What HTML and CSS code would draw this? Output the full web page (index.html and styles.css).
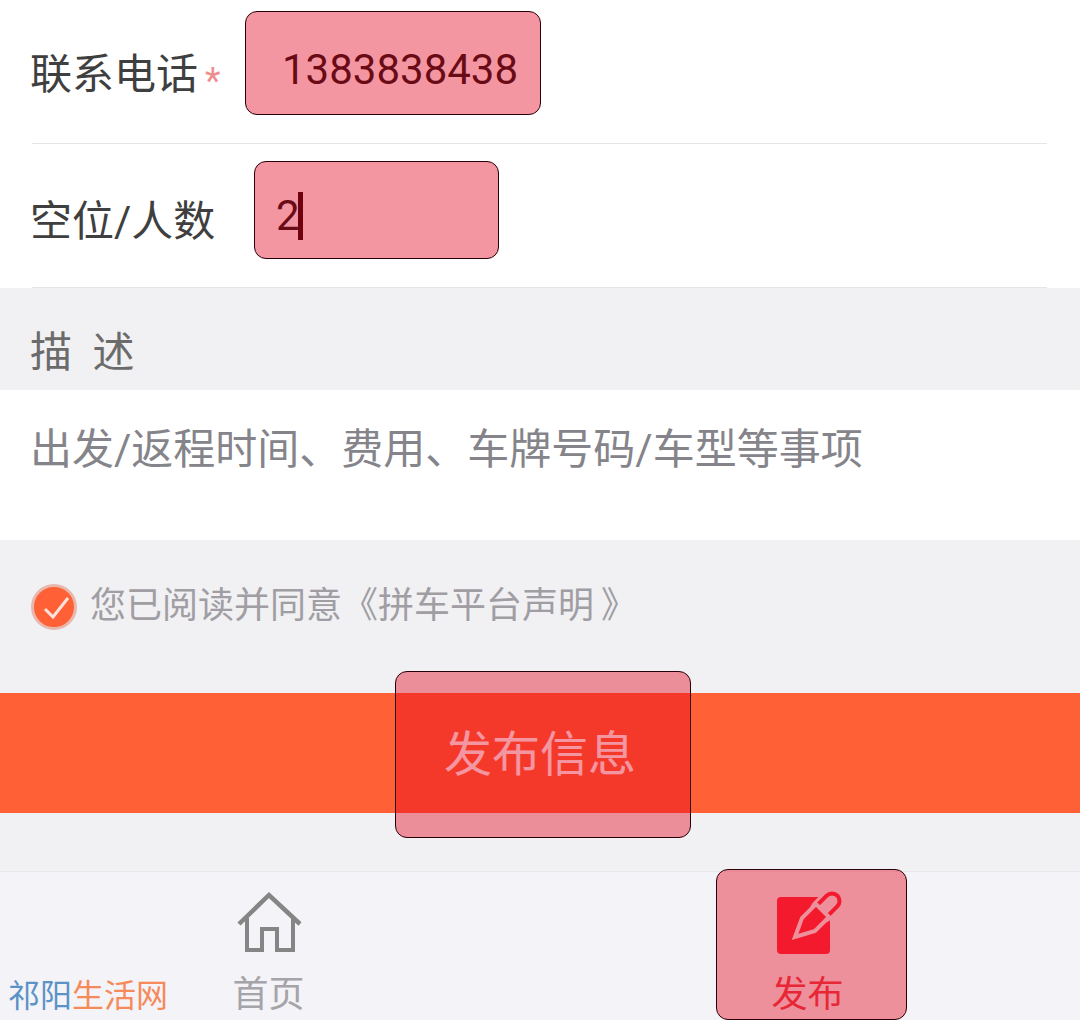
FILE: index.html
```html
<!DOCTYPE html>
<html lang="zh-CN">
<head>
  <meta charset="UTF-8" />
  <meta name="viewport" content="width=device-width, initial-scale=1.0"/>
  <title>发布信息</title>
  <link rel="stylesheet" href="styles.css">
</head>
<body>
  <div class="page">

    <!-- 表单 -->
    <div class="form-row">
      <div class="label">联系电话<span class="star">*</span></div>
      <div class="value value-phone">1383838438</div>
    </div>
    <div class="form-row">
      <div class="label">空位/人数</div>
      <div class="value">2<span class="caret"></span></div>
    </div>

    <div class="section-title">描 述</div>
    <div class="desc">出发/返程时间、费用、车牌号码/车型等事项</div>

    <div class="agree">
      <svg class="check" width="46" height="46" viewBox="0 0 46 46">
        <circle cx="23" cy="23" r="21.500" fill="#ff6035" stroke="#e8b8ad" stroke-width="3"/>
        <path d="M14 25 L22 33 L37 14" fill="none" stroke="#fbe3dc" stroke-width="3"/>
      </svg>
      <span>您已阅读并同意《拼车平台声明 》</span>
    </div>

    <div class="submit">发布信息</div>

    <!-- 底部导航 -->
    <div class="tabbar">
      <div class="tab tab-home">
        <svg class="tab-icon" width="70" height="70" viewBox="0 0 70 70">
          <path d="M5 39 L35 10 L66 39" fill="none" stroke="#858585" stroke-width="4.500"/>
          <path d="M13 33 V65 H28 V44 H43 V65 H59 V33" fill="none" stroke="#858585" stroke-width="4"/>
        </svg>
        <span>首页</span>
      </div>
      <div class="tab tab-active">
        <svg class="tab-icon" width="70" height="70" viewBox="0 0 70 70">
          <rect x="4" y="12" width="53" height="57" rx="4" fill="#ff2a38"/>
          <path d="M49.500 25.500 L59 16" stroke="#f4f3f7" stroke-width="25" stroke-linecap="round"/>
          <path d="M49.500 25.500 L59 16" stroke="#ff2a38" stroke-width="19" stroke-linecap="round"/>
          <path d="M49.500 25.500 L59 16" stroke="#f4f3f7" stroke-width="11" stroke-linecap="round"/>
          <path d="M22 52 L29 33 L43 19 L56 32 L42 46 Z" fill="#ff2a38" stroke="#f4f3f7" stroke-width="4"/>
        </svg>
        <span>发布</span>
      </div>
    </div>

    <div class="watermark"><span class="wm-blue">祁阳</span><span class="wm-orange">生活网</span></div>

    <!-- 标注框 -->
    <div class="mark mark-phone"></div>
    <div class="mark mark-seats"></div>
    <div class="mark mark-submit"></div>
    <div class="mark mark-tab"></div>

  </div>
</body>
</html>
```

FILE: styles.css
```css
:root {
  --gray-bg: #f1f0f3;
  --orange: #ff6035;
}

* {
  box-sizing: border-box;
}

html, body {
  margin: 0;
  padding: 0;
  background: #fff;
  font-family: Roboto, 'Noto Sans CJK SC', sans-serif;
}

.page {
  position: relative;
  width: 1080px;
  height: 1020px;
  overflow: hidden;
  background: var(--gray-bg);
}

.form-row {
  display: flex;
  align-items: center;
  height: 144px;
  padding: 0 0 0 30px;
  background: #fff;
  position: relative;
}

.form-row::after {
  content: "";
  position: absolute;
  left: 32px;
  right: 33px;
  bottom: 0;
  height: 1px;
  background: #e5e5e7;
}

.label {
  display: flex;
  width: 246px;
  font-size: 42px;
  line-height: 60px;
  color: #3f3f3f;
  padding-top: 11px;
}

.star {
  margin-left: 7px;
  font-size: 36px;
  color: #ee8f8f;
  line-height: 60px;
  padding-top: 6px;
}

.value {
  display: flex;
  align-items: center;
  font-size: 42px;
  line-height: 50px;
  color: #111;
}

.value-phone {
  margin-left: 6px;
  margin-top: -4px;
}

.caret {
  width: 5px;
  height: 48px;
  margin-left: -2px;
  background: #1a0000;
}

.section-title {
  height: 102px;
  padding: 35px 0 0 30px;
  font-size: 42px;
  line-height: 60px;
  word-spacing: 10px;
  color: #6b6b6b;
}

.desc {
  height: 150px;
  padding: 30px 0 0 30px;
  background: #fff;
  font-size: 42px;
  line-height: 60px;
  color: #85848a;
}

.agree {
  display: flex;
  align-items: center;
  gap: 13px;
  height: 153px;
  padding: 0 0 24px 31px;
  font-size: 36px;
  color: #a09ea3;
}

.check {
  flex: none;
  margin-top: 4px;
}

.agree span {
  margin-top: -5px;
  word-spacing: -2px;
}

.submit {
  height: 120px;
  margin-bottom: 58px;
  background: var(--orange);
  color: #fff;
  font-size: 48px;
  line-height: 124px;
  text-align: center;
}

.tabbar {
  display: flex;
  height: 149px;
  background: #f4f3f7;
  border-top: 1px solid #e9e8ec;
}

.tab {
  flex: 1;
  display: flex;
  flex-direction: column;
  align-items: center;
  padding-top: 13px;
  font-size: 36px;
  line-height: 50px;
  color: #a5a4a8;
}

.tab-home {
  padding-right: 2px;
}

.tab-icon {
  display: block;
  overflow: visible;
  margin-bottom: 15px;
}

.tab-active {
  padding-right: 4px;
  color: #e84048;
}

.watermark {
  position: absolute;
  left: 8px;
  top: 973px;
  font-size: 32px;
  line-height: 46px;
  white-space: nowrap;
}

.wm-blue {
  color: #5b93c7;
}

.wm-orange {
  color: #f58a5a;
}

.mark {
  position: absolute;
  background: rgba(229, 5, 32, 0.42);
  border: 1px solid #2a0008;
  border-radius: 12px;
}

.mark-phone {
  left: 245px;
  top: 11px;
  width: 296px;
  height: 104px;
}

.mark-seats {
  left: 254px;
  top: 161px;
  width: 245px;
  height: 98px;
}

.mark-submit {
  left: 395px;
  top: 671px;
  width: 296px;
  height: 167px;
}

.mark-tab {
  left: 716px;
  top: 869px;
  width: 191px;
  height: 151px;
}
```
